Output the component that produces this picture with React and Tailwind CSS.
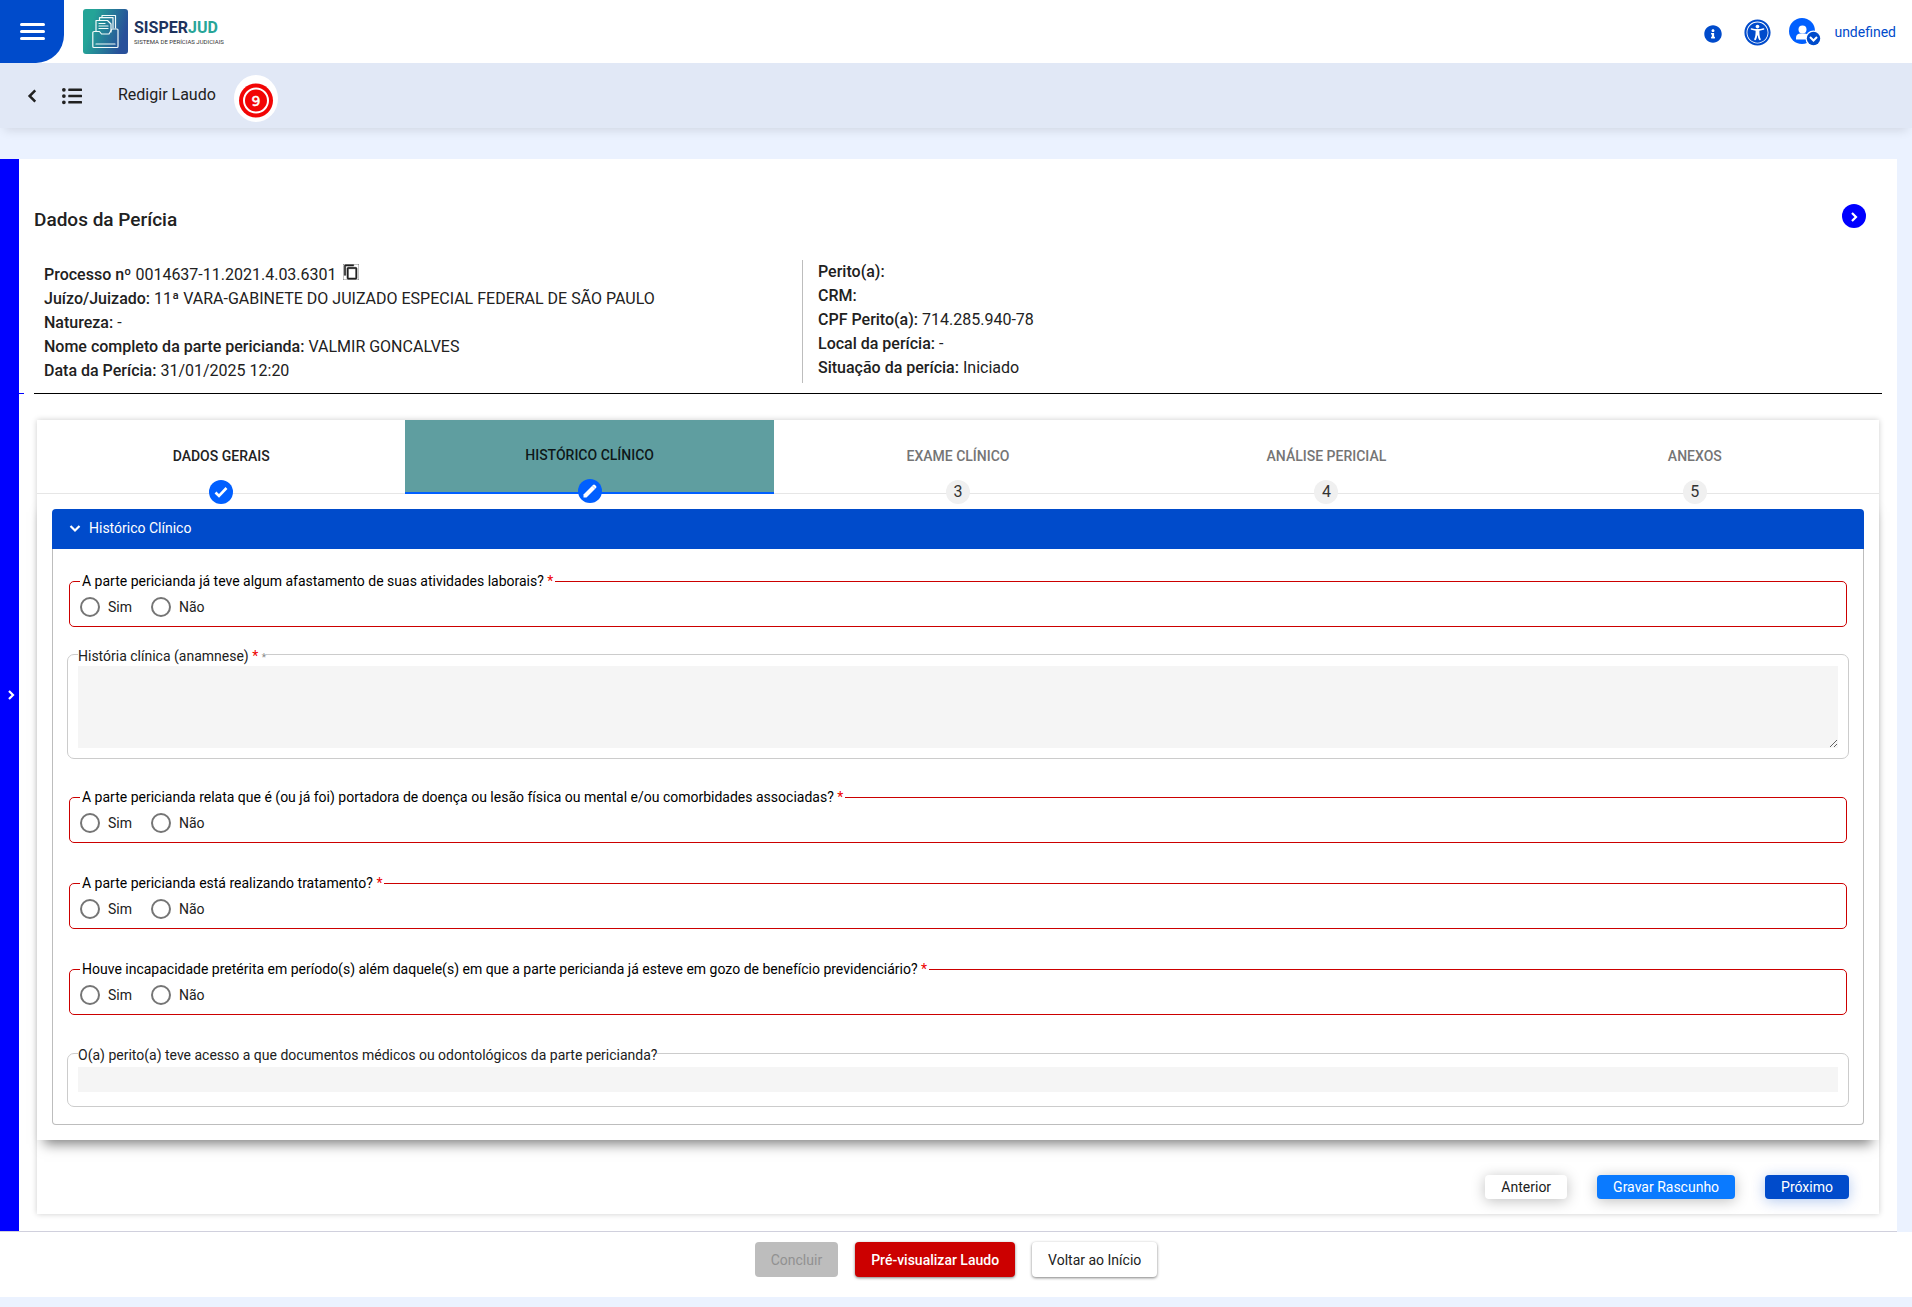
import React from 'react';
import { FaUniversalAccess, FaInfoCircle, FaListUl } from 'react-icons/fa';
import { MdContentCopy } from 'react-icons/md';

const processInfo = [
  { label: 'Processo nº', value: '0014637-11.2021.4.03.6301', copy: true },
  { label: 'Juízo/Juizado:', value: '11ª VARA-GABINETE DO JUIZADO ESPECIAL FEDERAL DE SÃO PAULO' },
  { label: 'Natureza:', value: '-' },
  { label: 'Nome completo da parte pericianda:', value: 'VALMIR GONCALVES' },
  { label: 'Data da Perícia:', value: '31/01/2025 12:20' },
];

const expertInfo = [
  { label: 'Perito(a):', value: '' },
  { label: 'CRM:', value: '' },
  { label: 'CPF Perito(a):', value: '714.285.940-78' },
  { label: 'Local da perícia:', value: '-' },
  { label: 'Situação da perícia:', value: 'Iniciado' },
];

const steps = [
  { label: 'DADOS GERAIS', state: 'done' },
  { label: 'HISTÓRICO CLÍNICO', state: 'active' },
  { label: 'EXAME CLÍNICO', state: 'todo' },
  { label: 'ANÁLISE PERICIAL', state: 'todo' },
  { label: 'ANEXOS', state: 'todo' },
];

function Logo() {
  return (
    <a href="#inicio" aria-label="SISPERJUD" className="ml-[19px] flex items-center gap-1.5">
      <svg width="45" height="45" viewBox="0 0 45 45">
        <defs>
          <linearGradient id="logo-bg" x1="0" y1="0" x2="1" y2="0.3">
            <stop offset="0.25" stopColor="#24a497" />
            <stop offset="1" stopColor="#28509a" />
          </linearGradient>
        </defs>
        <rect width="45" height="45" rx="3" fill="url(#logo-bg)" />
        <g fill="none" stroke="#f2fbfa" strokeWidth="1.2" strokeLinejoin="round" strokeLinecap="round">
          <path d="M13 22V11.500h11.500l3.500 3.500v8" />
          <path d="M16.500 11V8.700H30V19" />
          <path d="M19 8.500V6.500h13.500V19" />
          <path d="M16 14.500h6M16 17h9M16 19.500h9" />
          <path d="M11 22.500h5.500l2 2.500h7.500l3-5h5q1 0 1 1v16.500q0 1-1 1H11q-1.200 0-1.200-1V23.500q0-1 1.200-1z" />
          <path d="M13 35h19" />
        </g>
      </svg>
      <span className="flex flex-col">
        <span className="text-[16px]/5 font-bold text-[#1d335e]">
          SISPER<span className="text-[#28a598]">JUD</span>
        </span>
        <span className="text-[6px]/2 text-[#333]">SISTEMA DE PERÍCIAS JUDICIAIS</span>
      </span>
    </a>
  );
}

function Chevron({ dir = 'right', size = 16 }) {
  const paths = {
    right: 'M6 4l4 4-4 4',
    left: 'M10 3L5 8l5 5',
    down: 'M3.500 6L8 10.500 12.500 6',
  };
  return (
    <svg width={size} height={size} viewBox="0 0 16 16" fill="none" stroke="currentColor" strokeWidth="2.200">
      <path d={paths[dir]} />
    </svg>
  );
}

function UserIcon() {
  return (
    <svg width="32" height="28" viewBox="0 0 32 28">
      <circle cx="13" cy="13" r="13" fill="#005fff" />
      <circle cx="13.500" cy="11.500" r="4" fill="#fff" />
      <path d="M7 21.500v-2c0-2.500 2.200-4 4.500-4h4c2.300 0 4 1.500 4 4v2z" fill="#fff" />
      <circle cx="24.500" cy="20.500" r="8" fill="#fff" />
      <circle cx="24.500" cy="20.500" r="6.700" fill="#004bcb" />
      <path d="M21 19l3.500 3.500L28 19" fill="none" stroke="#fff" strokeWidth="2" />
    </svg>
  );
}

function Timer() {
  return (
    <svg width="44" height="48" viewBox="0 0 44 48" className="ml-[18px] mt-1.5">
      <ellipse cx="22" cy="23.500" rx="22" ry="23.500" fill="#fff" />
      <circle cx="22" cy="25.500" r="17" fill="#f20505" />
      <circle cx="22" cy="25.500" r="12" fill="none" stroke="#fff" strokeWidth="2" />
      <text x="22" y="30.500" textAnchor="middle" fontFamily="'DejaVu Sans', sans-serif" fontSize="14" fill="#fff" stroke="#fff" strokeWidth="0.5">9</text>
    </svg>
  );
}

function InfoList({ items, className }) {
  return (
    <ul className={className}>
      {items.map((item) => (
        <li key={item.label} className="flex h-6 items-center gap-1 whitespace-nowrap">
          <span className="font-medium">{item.label}</span>
          <span>{item.value}</span>
          {item.copy && (
            <button type="button" aria-label="Copiar número do processo" className="mb-1.5 ml-0.5">
              <MdContentCopy size={16} stroke="currentColor" strokeWidth={0.8} />
            </button>
          )}
        </li>
      ))}
    </ul>
  );
}

function StepBadge({ state, number }) {
  if (state === 'todo') {
    return <span className="flex size-6 items-center justify-center rounded-full bg-[#f0f0f0] text-base font-normal text-[#333]">{number}</span>;
  }
  return (
    <span className="flex size-6 items-center justify-center rounded-full bg-[#005fff] text-white">
      {state === 'done' ? (
        <svg width="16" height="16" viewBox="0 0 16 16">
          <path d="M2.500 8.500l3.500 3.500 7.500-8" fill="none" stroke="#fff" strokeWidth="2.600" />
        </svg>
      ) : (
        <svg width="16" height="16" viewBox="0 0 16 16">
          <path d="M1.500 14.500v-3L11 2q1-1 2 0l1 1q1 1 0 2l-9.500 9.500z" fill="#fff" />
          <path d="M10.500 3l3 3" stroke="#005fff" strokeOpacity="0.35" />
        </svg>
      )}
    </span>
  );
}

function Step({ step, number }) {
  const active = step.state === 'active';
  return (
    <button
      type="button"
      role="tab"
      aria-selected={active}
      className={`relative h-[74px] flex-1 pb-0.5 text-sm font-medium ${
        active ? 'border-b-2 border-[#005fff] bg-[#5f9ea0] text-black/85' : 'border-b border-[#e6e6e6] bg-white'
      } ${step.state === 'done' ? 'text-[#222]' : ''} ${step.state === 'todo' ? 'text-[#757575]' : ''}`}
    >
      {step.label}
      <span className="absolute inset-x-0 -bottom-[11px] z-10 flex justify-center">
        <StepBadge state={step.state} number={number} />
      </span>
    </button>
  );
}

function YesNoField({ name, question }) {
  return (
    <fieldset className="mx-0.5 h-14 rounded-[5px] border border-[#c00] pl-2.5">
      <legend className="px-0.5 text-sm/5 text-black">
        {question} <span className="text-[#e00]">*</span>
      </legend>
      <div className="flex gap-[19px] pt-1.5">
        {['Sim', 'Não'].map((option) => (
          <label key={option} className="flex items-center gap-2 text-sm/5">
            <input type="radio" name={name} className="size-5 appearance-none rounded-full border-2 border-[#757575] checked:border-[6px]" />
            {option}
          </label>
        ))}
      </div>
    </fieldset>
  );
}

export default function App() {
  return (
    <div className="min-h-screen bg-[#ebf2ff] font-[Roboto,sans-serif] text-base text-[#212121]">
      {/* Header */}
      <header className="flex h-[63px] items-center bg-white">
        <button type="button" aria-label="Menu" className="flex h-full w-16 flex-col items-center justify-center gap-1 rounded-br-[28px] bg-[#004bcb]">
          <span className="h-[3px] w-[25px] rounded-full bg-white" />
          <span className="h-[3px] w-[25px] rounded-full bg-white" />
          <span className="h-[3px] w-[25px] rounded-full bg-white" />
        </button>
        <Logo />
        <div className="ml-auto flex items-center pr-4 text-[#004bcb]">
          <button type="button" aria-label="Informações" className="mt-1">
            <FaInfoCircle size={18} />
          </button>
          <button type="button" aria-label="Acessibilidade" className="ml-[22px] mt-0.5">
            <FaUniversalAccess size={27} />
          </button>
          <button type="button" className="ml-[18px] flex items-center gap-[13px] text-sm">
            <UserIcon />
            undefined
          </button>
        </div>
      </header>

      {/* Page bar */}
      <div className="flex h-[65px] items-center bg-[#e1e8f6] shadow-[0_6px_10px_-4px_rgba(0,0,0,0.12)]">
        <button type="button" aria-label="Voltar" className="ml-6 mr-0.5">
          <Chevron dir="left" size={18} />
        </button>
        <button type="button" aria-label="Lista" className="ml-[18px]">
          <FaListUl size={20} />
        </button>
        <h1 className="ml-9 pb-0.5">Redigir Laudo</h1>
        <Timer />
      </div>

      {/* Main panel */}
      <main className="mr-[15px] mt-[31px] flex border-b border-[#d0d0dd] bg-white">
        <button type="button" aria-label="Abrir painel lateral" className="flex w-[19px] shrink-0 items-center justify-end bg-[#00f] text-white">
          <Chevron />
        </button>
        <div className="mt-[234px] h-px w-[5px] bg-[#00f]" />

        <div className="min-w-0 flex-1 pb-[17px] pl-2.5 pr-[15px] pt-[45px]">
          <div className="flex items-start justify-between pr-4">
            <h2 className="text-[19px]/8 font-medium">Dados da Perícia</h2>
            <button type="button" aria-label="Expandir dados" className="flex size-6 items-center justify-center rounded-full bg-[#00f] pt-0.5 text-white">
              <Chevron />
            </button>
          </div>

          <section className="flex border-b border-black pb-2.5 pt-6">
            <InfoList items={processInfo} className="w-[769px] border-r border-[#bdbdbd] pl-2.5 pt-[3px]" />
            <InfoList items={expertInfo} className="pb-[3px] pl-[15px]" />
          </section>

          {/* Stepper */}
          <section className="mx-[3px] mt-[26px] bg-white shadow-[0_0_6px_rgba(0,0,0,0.2)]">
            <div role="tablist" className="flex">
              {steps.map((step, i) => (
                <Step key={step.label} step={step} number={i + 1} />
              ))}
            </div>

            <div className="px-[15px] pb-[15px] pt-[15px] shadow-[0_11px_12px_-7px_rgba(0,0,0,0.5)]">
              <button type="button" className="flex h-10 w-full items-center gap-1.5 rounded-t bg-[#004bcb] pb-0.5 pl-[15px] text-sm text-white">
                <Chevron dir="down" />
                Histórico Clínico
              </button>
              <form className="flex flex-col rounded-b border border-t-0 border-[#bdbdbd] px-3.5 pb-[17px] pt-[22px]">
                <YesNoField name="afastamento" question="A parte pericianda já teve algum afastamento de suas atividades laborais?" />
                <fieldset className="mt-[17px] rounded-[7px] border border-[#ccc] px-2.5 pb-2.5 pt-0.5">
                  <legend className="h-5 text-sm/6">
                    <label htmlFor="anamnese">História clínica (anamnese)</label> <span className="text-[#e00]">*</span>{' '}
                    <span className="text-[10px] text-[#888]">*</span>
                  </legend>
                  <textarea id="anamnese" className="block h-[82px] w-full resize-y bg-[#f5f5f5]" />
                </fieldset>
                <div className="mt-7 flex flex-col gap-[30px]">
                  <YesNoField name="doenca" question="A parte pericianda relata que é (ou já foi) portadora de doença ou lesão física ou mental e/ou comorbidades associadas?" />
                  <YesNoField name="tratamento" question="A parte pericianda está realizando tratamento?" />
                  <YesNoField name="incapacidade" question="Houve incapacidade pretérita em período(s) além daquele(s) em que a parte pericianda já esteve em gozo de benefício previdenciário?" />
                </div>
                <fieldset className="mt-7 rounded-[7px] border border-[#ccc] px-2.5 pb-3.5 pt-1">
                  <legend className="h-5 text-sm/6">
                    <label htmlFor="documentos">O(a) perito(a) teve acesso a que documentos médicos ou odontológicos da parte pericianda?</label>
                  </legend>
                  <input id="documentos" type="text" className="block h-[25px] w-full bg-[#f5f5f5]" />
                </fieldset>
              </form>
            </div>

            <div className="flex justify-end gap-[30px] pb-[15px] pr-[30px] pt-[35px] text-sm">
              <button type="button" className="h-6 rounded bg-white px-4 shadow-[0_2px_14px_rgba(0,0,0,0.25)]">Anterior</button>
              <button type="button" className="h-6 rounded bg-[#0a7aff] px-4 text-white shadow-[0_2px_14px_rgba(0,0,0,0.25)]">Gravar Rascunho</button>
              <button type="button" className="h-6 rounded bg-[#004bcb] px-4 text-white shadow-[0_2px_14px_rgba(0,75,203,0.3)]">Próximo</button>
            </div>
          </section>
        </div>
      </main>

      {/* Page actions */}
      <footer className="flex h-[65px] justify-center gap-[17px] bg-white pt-2.5 text-sm">
        <button type="button" disabled className="h-[35px] rounded bg-[#bdbdbd] px-4 text-[#919191]">Concluir</button>
        <button type="button" className="h-[35px] rounded bg-[#c00] px-4 font-medium text-white shadow-[0_1px_3px_rgba(0,0,0,0.5)]">Pré-visualizar Laudo</button>
        <button type="button" className="h-[35px] rounded bg-white px-4 shadow-[0_1px_3px_rgba(0,0,0,0.5)]">Voltar ao Início</button>
      </footer>
    </div>
  );
}
